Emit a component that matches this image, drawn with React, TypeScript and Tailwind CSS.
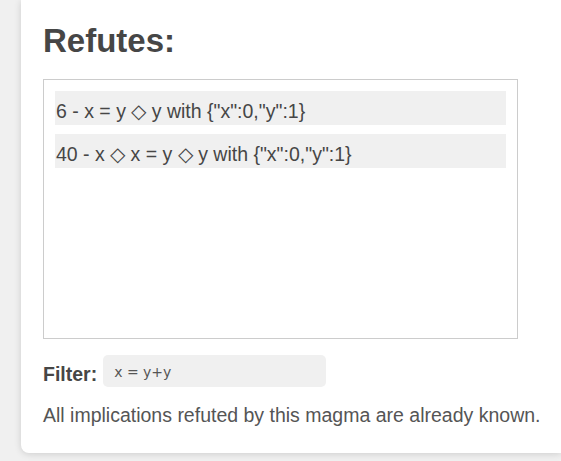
import React, { useState } from 'react';

const refutations = [
  '6 - x = y ◇ y with {"x":0,"y":1}',
  '40 - x ◇ x = y ◇ y with {"x":0,"y":1}',
];

export default function App() {
  const [filter, setFilter] = useState('');

  return (
    <div className="min-h-screen bg-[#f0f0f0] pl-[21px] pb-[9px] overflow-hidden font-['Liberation_Sans',Arial,sans-serif]">
      <div className="bg-white rounded-bl-lg shadow-[0_1px_7px_rgba(0,0,0,0.15)] pl-[22px] pt-[22px] pb-[22px]">
        <h2 className="text-[33px] leading-[38px] font-bold text-[#464646] mb-[19px]">Refutes:</h2>

        <div className="w-[475px] h-[260px] border border-[#ccc] p-[11px] flex flex-col gap-[9px]">
          {refutations.map((r) => (
            <div key={r} className="bg-[#f0f0f0] h-[34px] pt-[8px] px-[1px] text-[19.5px] leading-[24px] text-[#464646]">
              {r}
            </div>
          ))}
        </div>

        <div className="flex items-start gap-[6px] mt-[16px]">
          <span className="text-[19.5px] font-bold text-[#464646] mt-[5px]">Filter:</span>
          <input
            value={filter}
            onChange={(e) => setFilter(e.target.value)}
            placeholder="x = y+y"
            className="w-[223px] h-[32px] bg-[#f0f0f0] rounded-[5px] pl-[11px] pr-[12px] pt-[2px] font-['DejaVu_Sans',sans-serif] text-[14px] text-[#444] placeholder:text-[#555] outline-none"
          />
        </div>

        <p className="text-[19.5px] text-[#555] mt-[12px]">All implications refuted by this magma are already known.</p>
      </div>
    </div>
  );
}
